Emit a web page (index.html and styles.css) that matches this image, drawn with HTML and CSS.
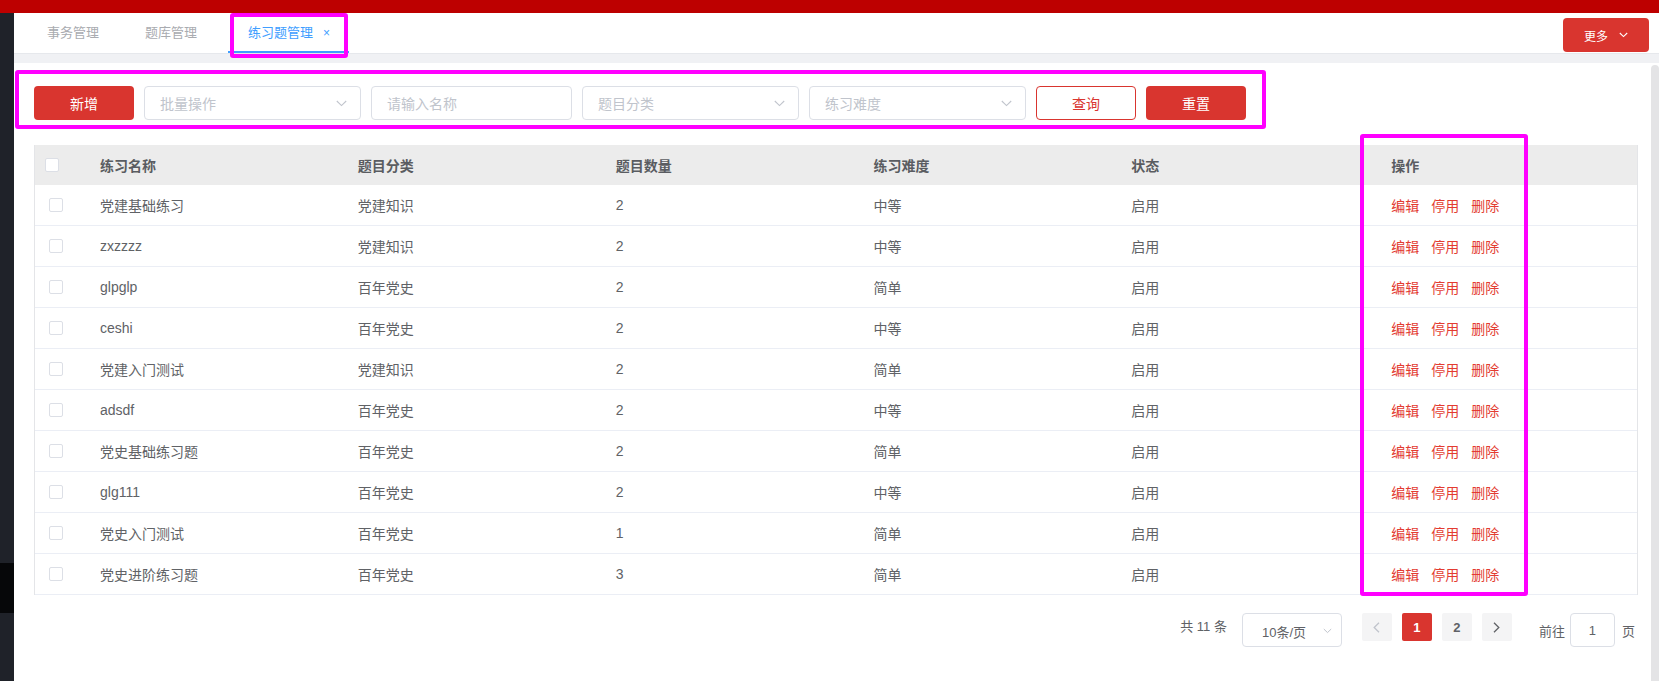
FILE: index.html
```html
<!DOCTYPE html>
<html lang="zh-CN">
<head>
<meta charset="utf-8">
<title>练习题管理</title>
<link rel="stylesheet" href="styles.css">
</head>
<body>
<div class="topbar"></div>
<div class="layout">
  <aside class="sidebar"><div class="sidebar-dark"></div></aside>
  <div class="main">
    <div class="tabs-bar">
      <div class="tabs">
        <div class="tab">事务管理</div>
        <div class="tab">题库管理</div>
        <div class="tab active">练习题管理<span class="close">×</span></div>
      </div>
      <button class="more-btn">更多<svg class="more-chev" width="9" height="6" viewBox="0 0 9 6"><path d="M0.8 1 L4.5 4.6 L8.2 1" fill="none" stroke="#fff" stroke-width="1.1"/></svg></button>
    </div>
    <div class="strip"></div>
    <div class="body-row">
      <div class="content">
        <div class="filters">
          <button class="btn btn-red w100">新增</button>
          <div class="select w217"><span>批量操作</span><svg width="11" height="7" viewBox="0 0 11 7"><path d="M0.8 1 L5.5 5.6 L10.2 1" fill="none" stroke="#c0c4cc" stroke-width="1.1"/></svg></div>
          <div class="select input w201"><span>请输入名称</span></div>
          <div class="select w217"><span>题目分类</span><svg width="11" height="7" viewBox="0 0 11 7"><path d="M0.8 1 L5.5 5.6 L10.2 1" fill="none" stroke="#c0c4cc" stroke-width="1.1"/></svg></div>
          <div class="select w217"><span>练习难度</span><svg width="11" height="7" viewBox="0 0 11 7"><path d="M0.8 1 L5.5 5.6 L10.2 1" fill="none" stroke="#c0c4cc" stroke-width="1.1"/></svg></div>
          <button class="btn btn-outline w100">查询</button>
          <button class="btn btn-red w100">重置</button>
        </div>

        <div class="table">
          <div class="tr thead">
            <div class="td cb-cell head-cb"><span class="checkbox"></span></div>
            <div class="td">练习名称</div>
            <div class="td">题目分类</div>
            <div class="td">题目数量</div>
            <div class="td">练习难度</div>
            <div class="td">状态</div>
            <div class="td last">操作</div>
          </div>
          <div class="tr"><div class="td cb-cell"><span class="checkbox"></span></div><div class="td">党建基础练习</div><div class="td">党建知识</div><div class="td">2</div><div class="td">中等</div><div class="td">启用</div><div class="td last ops"><span>编辑</span><span>停用</span><span>删除</span></div></div>
          <div class="tr"><div class="td cb-cell"><span class="checkbox"></span></div><div class="td">zxzzzz</div><div class="td">党建知识</div><div class="td">2</div><div class="td">中等</div><div class="td">启用</div><div class="td last ops"><span>编辑</span><span>停用</span><span>删除</span></div></div>
          <div class="tr"><div class="td cb-cell"><span class="checkbox"></span></div><div class="td">glpglp</div><div class="td">百年党史</div><div class="td">2</div><div class="td">简单</div><div class="td">启用</div><div class="td last ops"><span>编辑</span><span>停用</span><span>删除</span></div></div>
          <div class="tr"><div class="td cb-cell"><span class="checkbox"></span></div><div class="td">ceshi</div><div class="td">百年党史</div><div class="td">2</div><div class="td">中等</div><div class="td">启用</div><div class="td last ops"><span>编辑</span><span>停用</span><span>删除</span></div></div>
          <div class="tr"><div class="td cb-cell"><span class="checkbox"></span></div><div class="td">党建入门测试</div><div class="td">党建知识</div><div class="td">2</div><div class="td">简单</div><div class="td">启用</div><div class="td last ops"><span>编辑</span><span>停用</span><span>删除</span></div></div>
          <div class="tr"><div class="td cb-cell"><span class="checkbox"></span></div><div class="td">adsdf</div><div class="td">百年党史</div><div class="td">2</div><div class="td">中等</div><div class="td">启用</div><div class="td last ops"><span>编辑</span><span>停用</span><span>删除</span></div></div>
          <div class="tr"><div class="td cb-cell"><span class="checkbox"></span></div><div class="td">党史基础练习题</div><div class="td">百年党史</div><div class="td">2</div><div class="td">简单</div><div class="td">启用</div><div class="td last ops"><span>编辑</span><span>停用</span><span>删除</span></div></div>
          <div class="tr"><div class="td cb-cell"><span class="checkbox"></span></div><div class="td">glg111</div><div class="td">百年党史</div><div class="td">2</div><div class="td">中等</div><div class="td">启用</div><div class="td last ops"><span>编辑</span><span>停用</span><span>删除</span></div></div>
          <div class="tr"><div class="td cb-cell"><span class="checkbox"></span></div><div class="td">党史入门测试</div><div class="td">百年党史</div><div class="td">1</div><div class="td">简单</div><div class="td">启用</div><div class="td last ops"><span>编辑</span><span>停用</span><span>删除</span></div></div>
          <div class="tr"><div class="td cb-cell"><span class="checkbox"></span></div><div class="td">党史进阶练习题</div><div class="td">百年党史</div><div class="td">3</div><div class="td">简单</div><div class="td">启用</div><div class="td last ops"><span>编辑</span><span>停用</span><span>删除</span></div></div>
        </div>

        <div class="pagination">
          <span class="total">共 11 条</span>
          <div class="page-size"><span>10条/页</span><svg width="9" height="6" viewBox="0 0 9 6"><path d="M0.8 1 L4.5 4.6 L8.2 1" fill="none" stroke="#c0c4cc" stroke-width="1"/></svg></div>
          <button class="pg-btn"><svg width="7" height="11" viewBox="0 0 7 11"><path d="M6 0.8 L1.2 5.5 L6 10.2" fill="none" stroke="#c0c4cc" stroke-width="1.3"/></svg></button>
          <button class="pg-btn pg-active">1</button>
          <button class="pg-btn">2</button>
          <button class="pg-btn"><svg width="7" height="11" viewBox="0 0 7 11"><path d="M1 0.8 L5.8 5.5 L1 10.2" fill="none" stroke="#606266" stroke-width="1.3"/></svg></button>
          <div class="jumper"><span>前往</span><div class="jump-input">1</div><span>页</span></div>
        </div>
      </div>
      <div class="scrollbar"></div>
    </div>
  </div>
</div>

<div class="mark mark-tab"></div>
<div class="mark mark-filter"></div>
<div class="mark mark-ops"></div>
</body>
</html>
```

FILE: styles.css
```css
* { box-sizing: border-box; }

html, body {
  margin: 0;
  padding: 0;
  height: 100%;
  overflow: hidden;
  background: #fff;
  font-family: "Liberation Sans", "Noto Sans CJK SC", sans-serif;
  color: #606266;
}

button {
  font-family: inherit;
  border: none;
  padding: 0;
  cursor: pointer;
}

.topbar {
  height: 13px;
  background: #bd0000;
}

.layout {
  display: flex;
  height: calc(100vh - 13px);
}

.sidebar {
  width: 14px;
  flex: none;
  background: #1f2229;
}

.sidebar-dark {
  margin-top: 550px;
  height: 50px;
  background: #060709;
}

.main {
  flex: 1;
  display: flex;
  flex-direction: column;
  min-width: 0;
}

/* tabs */
.tabs-bar {
  height: 40px;
  display: flex;
  justify-content: space-between;
  align-items: flex-start;
  background: #fff;
}

.tabs {
  display: flex;
  gap: 6px;
  padding-left: 13px;
  height: 40px;
}

.tab {
  height: 40px;
  line-height: 40px;
  padding: 0 20px;
  font-size: 13px;
  color: #a9abb0;
  white-space: nowrap;
}

.tab.active {
  margin-left: 5px;
  padding-right: 19px;
  color: #409eff;
  box-shadow: inset 0 -2px 0 #409eff;
}

.tab .close {
  margin-left: 10px;
  font-size: 12px;
  color: #409eff;
}

.more-btn {
  margin-top: 5px;
  margin-right: 10px;
  width: 86px;
  height: 34px;
  border-radius: 4px;
  background: #d9352f;
  color: #fff;
  font-size: 12px;
  display: flex;
  align-items: center;
  padding-left: 21px;
}

.more-chev {
  margin-left: 11px;
}

.strip {
  height: 10px;
  background: #f0f1f4;
  border-top: 1px solid #e6e8ec;
}

/* body */
.body-row {
  flex: 1;
  display: flex;
  min-height: 0;
}

.content {
  flex: 1;
  min-width: 0;
  padding: 23px 13px 0 20px;
}

.scrollbar {
  width: 8px;
  flex: none;
  margin-top: 2px;
  background: #e4e4e6;
  border-radius: 4px 4px 0 0;
}

/* filters */
.filters {
  display: flex;
  gap: 10px;
  height: 34px;
}

.w100 { width: 100px; }
.w201 { width: 201px; }
.w217 { width: 217px; }

.btn {
  height: 34px;
  border-radius: 4px;
  font-size: 14px;
}

.btn-red {
  background: #d9352f;
  color: #fff;
}

.btn-outline {
  background: #fff;
  color: #d9352f;
  border: 1px solid #d9352f;
}

.select {
  height: 34px;
  border: 1px solid #dcdfe6;
  border-radius: 4px;
  display: flex;
  align-items: center;
  justify-content: space-between;
  padding: 0 13px 0 15px;
  font-size: 14px;
  color: #c0c4cc;
}

/* table */
.table {
  margin-top: 25px;
  border-left: 1px solid #e4e5e8;
  border-right: 1px solid #e4e5e8;
}

.tr {
  display: grid;
  grid-template-columns: 55px repeat(6, 1fr);
  height: 41px;
  align-items: center;
  border-bottom: 1px solid #ebeef5;
  font-size: 14px;
  color: #606266;
}

.tr.thead {
  height: 40px;
  border-bottom: none;
  background: #ececec;
  font-weight: bold;
  color: #5a5c61;
}

.td {
  padding-left: 10px;
  white-space: nowrap;
}

.td.last {
  padding-left: 12px;
}

.cb-cell {
  padding-left: 14px;
  display: flex;
  align-items: center;
}

.head-cb {
  padding-left: 10px;
}

.checkbox {
  width: 14px;
  height: 14px;
  border: 1px solid #dcdfe6;
  border-radius: 2px;
  background: #fff;
  display: block;
}

.ops {
  display: flex;
  gap: 12px;
  color: #e33b31;
}

/* pagination */
.pagination {
  margin-top: 18px;
  display: flex;
  justify-content: flex-end;
  align-items: flex-start;
  padding-right: 3px;
  font-size: 13px;
  color: #606266;
}

.total {
  line-height: 28px;
  margin-right: 15px;
}

.page-size {
  width: 100px;
  height: 34px;
  border: 1px solid #dcdfe6;
  border-radius: 4px;
  display: flex;
  align-items: center;
  justify-content: space-between;
  padding: 2px 9px 0 19px;
  margin-right: 20px;
  font-size: 13px;
  color: #606266;
}

.pg-btn {
  width: 30px;
  height: 28px;
  border-radius: 2px;
  background: #f4f4f5;
  color: #606266;
  font-size: 13px;
  font-weight: bold;
  display: flex;
  align-items: center;
  justify-content: center;
  margin-right: 10px;
}

.pg-btn.pg-active {
  background: #d9352f;
  color: #fff;
}

.jumper {
  margin-left: 17px;
  height: 34px;
  display: flex;
  align-items: center;
}

.jump-input {
  width: 45px;
  height: 34px;
  margin: 0 7px 0 5px;
  border: 1px solid #dcdfe6;
  border-radius: 4px;
  display: flex;
  align-items: center;
  justify-content: center;
  font-size: 13px;
}

/* annotation marks */
.mark {
  position: absolute;
  border: 4px solid #ff00ff;
  border-radius: 3px;
  pointer-events: none;
}

.mark-tab {
  left: 230px;
  top: 13px;
  width: 118px;
  height: 45px;
}

.mark-filter {
  left: 15px;
  top: 70px;
  width: 1251px;
  height: 59px;
}

.mark-ops {
  left: 1360px;
  top: 134px;
  width: 168px;
  height: 462px;
}
```
